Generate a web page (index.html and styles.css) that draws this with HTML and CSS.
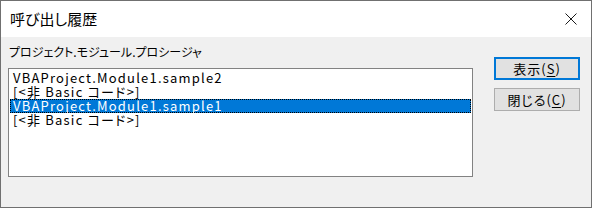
FILE: index.html
```html
<!DOCTYPE html>
<html lang="ja">
<head>
<meta charset="utf-8">
<link rel="stylesheet" href="styles.css">
</head>
<body>
<div class="window">
  <div class="titlebar">
    <span class="title">呼び出し履歴</span>
    <svg class="close" width="12" height="12" viewBox="0 0 12 12"><path d="M0.5 0.5 L11.5 11.5 M11.5 0.5 L0.5 11.5" stroke="#1a1a1a" stroke-width="1" fill="none"/></svg>
  </div>
  <div class="content">
    <div class="left">
      <div class="label">プロジェクト.モジュール.プロシージャ</div>
      <div class="listbox">
        <div class="row">VBAProject.Module1.sample2</div>
        <div class="row">[&lt;非 Basic コード&gt;]</div>
        <div class="row selected">VBAProject.Module1.sample1</div>
        <div class="row">[&lt;非 Basic コード&gt;]</div>
      </div>
    </div>
    <div class="buttons">
      <div class="btn default">表示(<u>S</u>)</div>
      <div class="btn">閉じる(<u>C</u>)</div>
    </div>
  </div>
</div>
</body>
</html>
```

FILE: styles.css
```css
html, body {
  margin: 0;
  padding: 0;
}
body {
  width: 592px;
  height: 208px;
  font-family: "Noto Sans CJK JP", "Noto Sans", sans-serif;
  font-feature-settings: "palt";
  color: #000;
}
.window {
  box-sizing: border-box;
  width: 592px;
  height: 208px;
  border: 1px solid #707070;
  background: #f0f0f0;
  display: flex;
  flex-direction: column;
}
.titlebar {
  height: 36px;
  background: #fff;
  display: flex;
  align-items: center;
  justify-content: space-between;
  padding: 0 14px 0 9px;
}
.title {
  font-size: 15px;
  line-height: 18px;
  margin-top: -1px;
}
.close {
  display: block;
}
.content {
  display: flex;
  padding: 7px 0 0 7px;
}
.left {
  width: 465px;
}
.label {
  font-size: 12px;
  line-height: 16px;
  height: 24px;
  padding-left: 1px;
}
.listbox {
  box-sizing: border-box;
  height: 109px;
  background: #fff;
  border: 1px solid #828282;
  padding: 2px 1px 0 1px;
}
.row {
  height: 14px;
  line-height: 14px;
  font-size: 13px;
  letter-spacing: 1.2px;
  padding-left: 3px;
  white-space: nowrap;
}
.row.selected {
  background: #0078d7;
  color: #fff;
  outline: 1px dotted #000;
  outline-offset: -1px;
}
.buttons {
  margin-left: 21px;
  padding-top: 13px;
  display: flex;
  flex-direction: column;
  gap: 8px;
}
.btn {
  box-sizing: border-box;
  width: 86px;
  height: 23px;
  background: #e1e1e1;
  border: 1px solid #adadad;
  font-size: 13px;
  letter-spacing: 1px;
  line-height: 21px;
  text-align: center;
}
.btn.default {
  border: 2px solid #0078d7;
  line-height: 19px;
}
.btn u {
  text-decoration-thickness: 1px;
  text-underline-offset: 2px;
}
```
